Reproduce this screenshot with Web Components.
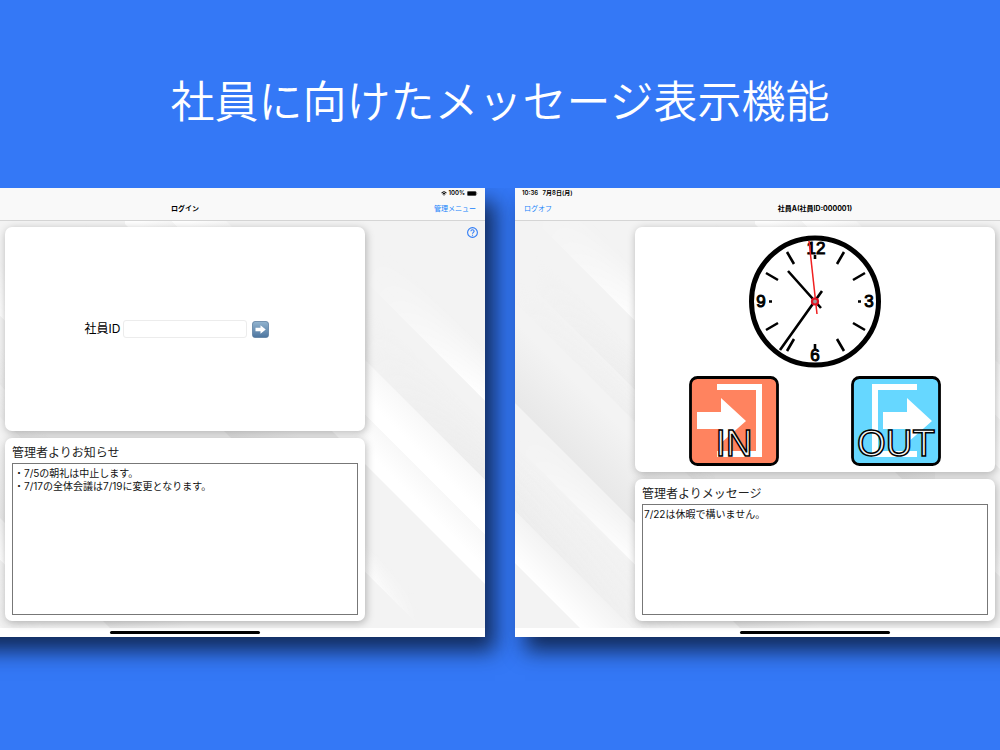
<!DOCTYPE html>
<html lang="ja">
<head>
<meta charset="utf-8">
<meta name="viewport" content="width=device-width, initial-scale=1">
<title>社員に向けたメッセージ表示機能</title>
<style>
  body { margin: 0; min-height: 100vh; background: #3478f6; overflow-x: hidden;
    font-family: Inter, "Noto Sans CJK JP", sans-serif; }
</style>
</head>
<body>
<promo-page>
  <span slot="headline">社員に向けたメッセージ表示機能</span>
  <tablet-screen>
    <status-battery slot="status-end"></status-battery>
    <span slot="title">ログイン</span>
    <nav-link slot="nav-end">管理メニュー</nav-link>
    <help-button slot="overlay"></help-button>
    <content-card><login-form></login-form></content-card>
    <content-card><message-box heading="管理者よりお知らせ" style="--box-height:152px" text="・7/5の朝礼は中止します。
・7/17の全体会議は7/19に変更となります。"></message-box></content-card>
  </tablet-screen>
  <tablet-screen>
    <span slot="status-start">10:36&nbsp;&nbsp; 7月8日(月)</span>
    <nav-link slot="nav-start">ログオフ</nav-link>
    <span slot="title">社員A(社員ID:000001)</span>
    <content-card><time-clock></time-clock></content-card>
    <content-card><message-box heading="管理者よりメッセージ" style="--box-height:111px" text="7/22は休暇で構いません。"></message-box></content-card>
  </tablet-screen>
</promo-page>

<script>
const define = (name, markup, setup) => {
  const tpl = document.createElement('template');
  tpl.innerHTML = markup;
  customElements.define(name, class extends HTMLElement {
    constructor() {
      super();
      this.attachShadow({ mode: 'open' }).append(tpl.content.cloneNode(true));
    }
    connectedCallback() { if (setup) setup(this, this.shadowRoot); }
  });
};

define('promo-page', `
<style>
  :host { display: block; }
  h1 { margin: 0; padding: 70px 20px 54px; font-size: 44px; line-height: 64px; font-weight: 350; text-align: center; color: #fff; }
  .stage { display: flex; justify-content: center; gap: 30px; overflow: hidden; padding-bottom: 60px; }
</style>
<h1><slot name="headline"></slot></h1>
<main class="stage"><slot></slot></main>`);

define('tablet-screen', `
<style>
  :host { display: flex; flex-direction: column; flex: 0 0 60%; box-sizing: border-box; background: #f9f9f9; color: #000;
    box-shadow: 10px 14px 20px rgba(14, 34, 74, .9); }
  .status { display: flex; justify-content: space-between; align-items: center; height: 10px; padding: 0 7px; font-size: 6px; line-height: 10px; font-weight: 600; }
  nav { display: grid; grid-template-columns: 1fr auto 1fr; align-items: center; height: 22px; padding: 0 9px; border-bottom: 1px solid #d5d5d5; font-size: 7px; line-height: 10px; }
  .title { font-weight: 700; }
  .end { text-align: right; }
  .body { position: relative; flex: 1; display: flex; flex-direction: column; align-items: center; gap: 7px; padding: 6px 0 7px; background: #f3f3f3; }
  .backdrop { position: absolute; inset: 0; width: 100%; height: 100%; }
  slot[name=overlay] { position: absolute; display: block; top: 6px; right: 7px; }
  footer { display: flex; justify-content: center; align-items: center; height: 9px; background: #fff; }
  footer i { width: 25%; height: 3px; border-radius: 2px; background: #000; }
</style>
<div class="status"><span><slot name="status-start"></slot></span><slot name="status-end"></slot></div>
<nav><div><slot name="nav-start"></slot></div><div class="title"><slot name="title"></slot></div><div class="end"><slot name="nav-end"></slot></div></nav>
<div class="body">
  <svg class="backdrop" viewBox="0 0 600 407" preserveAspectRatio="none" aria-hidden="true">
    <defs>
      <linearGradient id="w" x1="0" y1="0" x2="0" y2="1"><stop offset="0" stop-color="#fff" stop-opacity="0"/><stop offset="1" stop-color="#fff"/></linearGradient>
      <linearGradient id="d" x1="0" y1="0" x2="0" y2="1"><stop offset="0" stop-color="#e8e8e8" stop-opacity="0"/><stop offset="1" stop-color="#e8e8e8"/></linearGradient>
      <linearGradient id="s" x1="0" y1="0" x2="0" y2="1"><stop offset="0" stop-color="#ececec" stop-opacity="0"/><stop offset="1" stop-color="#ececec"/></linearGradient>
      <linearGradient id="b" x1="0" y1="0" x2="0" y2="1"><stop offset="0" stop-color="#f8f8f8"/><stop offset=".7" stop-color="#fff"/></linearGradient>
      <linearGradient id="fin"><stop offset="0" stop-color="#000"/><stop offset="1" stop-color="#fff"/></linearGradient>
      <linearGradient id="fout"><stop offset="0" stop-color="#fff"/><stop offset="1" stop-color="#000"/></linearGradient>
      <mask id="in" maskContentUnits="objectBoundingBox"><rect width="1" height="1" fill="url(#fin)"/></mask>
      <mask id="out" maskContentUnits="objectBoundingBox"><rect width="1" height="1" fill="url(#fout)"/></mask>
    </defs>
    <g transform="skewY(45)">
      <rect x="18" y="-75" width="120" height="55" fill="url(#w)" mask="url(#in)"/>
      <rect x="20" y="9" width="120" height="40" fill="url(#s)" mask="url(#in)"/>
      <rect x="0" y="50" width="200" height="31" fill="url(#s)" mask="url(#in)"/>
      <rect x="0" y="100" width="420" height="82" fill="url(#d)"/>
      <rect x="0" y="184" width="130" height="40" fill="url(#w)" mask="url(#in)"/>
      <rect x="0" y="225" width="200" height="65" fill="url(#s)" mask="url(#out)"/>
      <rect x="0" y="290" width="130" height="52" fill="url(#w)"/>
      <rect x="475" y="-475" width="125" height="55" fill="url(#w)" mask="url(#in)"/>
      <rect x="470" y="-400" width="130" height="59" fill="url(#s)" mask="url(#in)"/>
      <rect x="240" y="-341" width="360" height="55" fill="url(#b)"/>
      <rect x="240" y="-286" width="360" height="49" fill="url(#b)"/>
      <rect x="470" y="-159" width="65" height="30" fill="url(#w)" mask="url(#out)"/>
      <rect x="200" y="-200" width="220" height="71" fill="url(#d)"/>
    </g>
  </svg>
  <slot></slot>
  <slot name="overlay"></slot>
</div>
<footer><i></i></footer>`);

define('status-battery', `
<style>
  :host { display: flex; align-items: center; gap: 2px; }
  svg { display: block; }
</style>
<svg width="6" height="5" viewBox="0 0 12 10" fill="none" stroke="#000" stroke-width="2" aria-hidden="true"><path d="M1 3.6Q6-.8 11 3.6M3 6Q6 3.4 9 6"/><path d="M4.4 7.4Q6 6 7.600 7.400L6 9.400z" fill="#000" stroke="none"/></svg>
<span>100%</span>
<svg width="11" height="5" viewBox="0 0 22 10" aria-hidden="true"><rect x=".5" y=".5" width="18" height="9" rx="2.500" fill="#000" stroke="#777"/><path d="M20 3.500Q21.500 5 20 6.500z" fill="#777"/></svg>`);

define('nav-link', `
<style>
  :host { display: inline-block; }
  a { color: #1683fb; text-decoration: none; }
</style>
<a href="#"><slot></slot></a>`);

define('help-button', `
<style>
  :host { display: block; }
  button { display: block; padding: 0; border: 0; background: none; }
  svg { display: block; }
</style>
<button type="button" aria-label="ヘルプ"><svg width="11" height="11" viewBox="0 0 22 22" fill="none" stroke="#2f7cf6" stroke-width="2.200"><circle cx="11" cy="11" r="9.800"/><path d="M7.800 8.600C7.800 4.400 14.200 4.600 14.200 8.400C14.200 10.800 11 10.800 11 13.600M11 15.400V17.400"/></svg></button>`);

define('content-card', `
<style>
  :host { position: relative; display: block; width: 60%; box-sizing: border-box; padding: 6px 7px; border-radius: 7px; background: #fff; box-shadow: 1px 2px 8px rgba(0, 0, 0, .28); }
</style>
<slot></slot>`);

define('login-form', `
<style>
  :host { display: block; }
  form { display: flex; justify-content: center; align-items: center; min-height: 192px; padding-right: 16px; }
  label { margin-right: 3px; font-size: 12px; line-height: 18px; }
  input { width: 124px; height: 18px; box-sizing: border-box; margin: 0 5px 0 0; padding: 0 4px; border: 1px solid #ececec; border-radius: 3px; background: #fff; font: inherit; font-size: 12px; outline: 0; }
  button { display: block; padding: 0; border: 0; background: none; }
  svg { display: block; }
</style>
<form>
  <label for="employee">社員ID</label>
  <input id="employee" type="text">
  <button type="button" aria-label="ログイン">
    <svg width="17" height="17" viewBox="0 0 34 34"><defs><linearGradient id="g" x1="0" y1="0" x2="0" y2="1"><stop offset="0" stop-color="#93b4cf"/><stop offset="1" stop-color="#4c759f"/></linearGradient></defs>
    <rect x="1" y="1" width="32" height="32" rx="5" fill="url(#g)" stroke="#587b9d" stroke-width="1.500"/><path d="M7 13.500H17V8.500L27.500 17L17 25.500V20.500H7z" fill="#fff"/></svg>
  </button>
</form>`);

define('message-box', `
<style>
  :host { display: block; }
  label { display: block; padding-bottom: 1px; font-size: 12px; line-height: 18px; color: #222; }
  textarea { display: block; width: 100%; height: var(--box-height); box-sizing: border-box; margin: 0; padding: 3px 1px; border: 1px solid #777; border-radius: 0; background: #fff; resize: none; outline: 0; overflow: hidden;
    font-family: inherit; font-size: 10px; line-height: 13px; color: #111; }
</style>
<label for="message"></label>
<textarea id="message" readonly></textarea>`, (host, root) => {
  root.querySelector('label').textContent = host.getAttribute('heading');
  root.querySelector('textarea').value = host.getAttribute('text');
});

define('time-clock', `
<style>
  :host { display: flex; flex-direction: column; align-items: center; gap: 8px; padding-top: 2px; }
  .actions { display: flex; gap: 72px; }
</style>
<clock-face></clock-face>
<div class="actions"><punch-button kind="in"></punch-button><punch-button kind="out"></punch-button></div>`);

define('clock-face', `
<style>
  :host { display: block; }
  svg { display: block; }
  text { font: 17px "Liberation Sans", sans-serif; stroke: #000; stroke-width: 1px; text-anchor: middle; }
</style>
<svg width="133" height="133" viewBox="0 0 133 133" role="img" aria-label="10:36">
  <circle cx="66" cy="66.500" r="63.500" fill="#fff" stroke="#000" stroke-width="5"/>
  <g stroke="#000" stroke-width="2.600">
    <path d="M88 29L95 17M104 45L116 38M104 88L116 95M88 104L95 116M45 104L38 116M29 88L17 95M29 45L17 38M45 29L38 17M66 20V24M66 109V114M20 66.500H23M109 66.500H112"/>
  </g>
  <text x="67" y="19">12</text><text x="120" y="72">3</text><text x="66" y="126">6</text><text x="12" y="72">9</text>
  <g stroke="#000" stroke-width="2.600"><path d="M39 36L72 73M31 115L73 56"/></g>
  <path d="M60 6L68 79" stroke="#f02020" stroke-width="1.500"/>
  <circle cx="66" cy="66.500" r="3" fill="#999" stroke="#e01020" stroke-width="2.200"/>
</svg>`);

define('punch-button', `
<style>
  :host { display: block; }
  button { display: block; padding: 0; border: 0; background: none; }
  svg { display: block; }
  text { font: 37px "Liberation Sans", sans-serif; fill: #f4f4f4; stroke: #000; stroke-width: 1.500px; text-anchor: middle; }
</style>
<button type="button"><svg width="90" height="90" viewBox="0 0 90 90">
  <rect class="plate" x="1.500" y="1.500" width="87" height="87" rx="7" stroke="#000" stroke-width="2.800"/>
  <path class="door" fill="#fff"/><path class="arrow" fill="#fff"/><text y="80"></text>
</svg></button>`, (host, root) => {
  const out = host.getAttribute('kind') === 'out';
  const set = (sel, attr, value) => root.querySelector(sel).setAttribute(attr, value);
  set('.plate', 'fill', out ? '#66d7ff' : '#ff835f');
  set('.door', 'd', out ? 'M66 8V14H27V75H66V81H21V8z' : 'M28 8H73V81H28V75H67V14H28z');
  set('.arrow', 'd', out ? 'M32 36H56V22L81 45L56 67V53H32z' : 'M8 36H32V22L57 45L32 67V53H8z');
  set('text', 'x', '45');
  root.querySelector('text').textContent = out ? 'OUT' : 'IN';
});
</script>
</body>
</html>
